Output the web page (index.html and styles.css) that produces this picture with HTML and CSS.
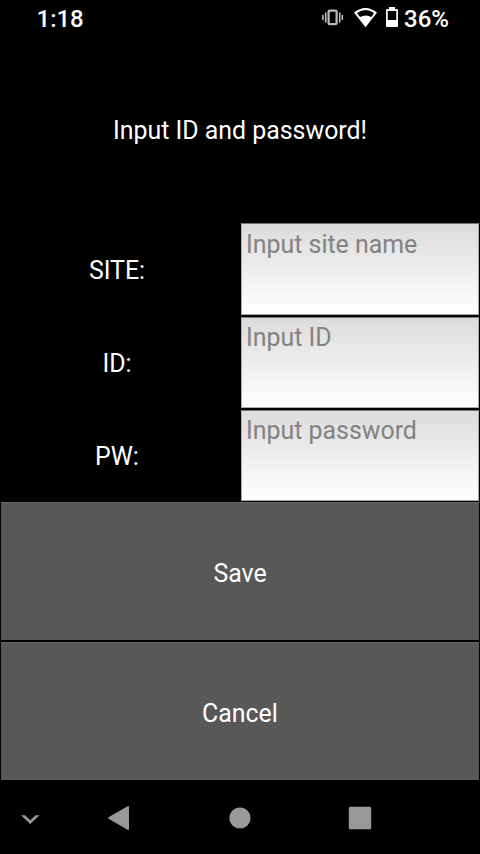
FILE: index.html
```html
<!DOCTYPE html>
<html lang="en"><head><meta charset="utf-8"><title>Input</title><link rel="stylesheet" href="styles.css"></head>
<body>
<header class="status"><span class="time">1:18</span>
<svg class="sys" width="80" height="36" viewBox="320 0 80 36"><g fill="none" stroke="#bbb"><rect x="328.600" y="10.600" width="8" height="13.600" rx="1" stroke-width="2.200"/><path stroke-width="1.600" d="M325.700 12.500v10M339.700 12.500v10M322.900 15v5M342.300 15v5"/></g><path fill="#fff" fill-rule="evenodd" d="M354 12.500Q365.500 3.500 377 12.500L365.500 27.300ZM357 13L360 17Q365.500 14 371.500 17L374 13Q365.500 7 357 13Z"/><path fill="#fff" fill-rule="evenodd" d="M389 7h6v2h2q1 0 1 1v16q0 1-1 1h-10q-1 0-1-1V10q0-1 1-1h2zM387.700 11v9h8.600v-9z"/></svg>
<span class="pct">36%</span></header>
<h1 class="title">Input ID and password!</h1>
<form class="fields">
<label>SITE:</label><div class="field">Input site name</div>
<label>ID:</label><div class="field">Input ID</div>
<label>PW:</label><div class="field">Input password</div>
</form>
<button class="btn">Save</button><button class="btn">Cancel</button>
<nav><svg width="480" height="72" viewBox="0 782 480 72"><g fill="#999"><path d="M21 815.300h4l5.300 5 5.200-5h4L30.300 824z"/><path d="M108.500 817.300L128 806q1 0 1 1v22q0 1-1 1l-19.500-11.300q-1-.700 0-1.400z"/><circle cx="240" cy="818" r="10.600"/><rect x="348.800" y="806.800" width="22.400" height="22.400" rx="1.500"/></g></svg></nav>
</body></html>
```
FILE: styles.css
```css
* { box-sizing: border-box; }
body { margin: 0; width: 480px; height: 854px; overflow: hidden; background: #000; color: #fff; font: 24.9px/30px Roboto, sans-serif; }
.status { display: flex; height: 36px; padding-left: 36.5px; font-weight: 500; font-size: 24px; line-height: 38px; }
.time { width: 283.5px; }
.sys { flex: none; }
.pct { padding-left: 4px; }
.title { margin: 0; height: 187px; padding-top: 80px; font: inherit; text-align: center; }
.fields { display: grid; grid-template-columns: 234px 238px; column-gap: 7px; grid-auto-rows: 93px; height: 279px; margin: 0; }
label { align-self: center; padding-top: 3px; text-align: center; }
.field { height: 92px; padding: 6px 4px; color: #828282; background: linear-gradient(#dcdcdc, #fff); border: 1px solid #aaa; border-top-color: #777; }
.field:nth-of-type(n+2) { height: 91px; margin-top: 1px; padding-top: 5px; }
.btn { display: block; width: 478px; height: 138px; margin: 0 1px 2px; padding: 4px 0 0; border: 0; border-top: 1px solid #666; background: #585858; color: #fff; font: inherit; }
nav svg { display: block; }
```
